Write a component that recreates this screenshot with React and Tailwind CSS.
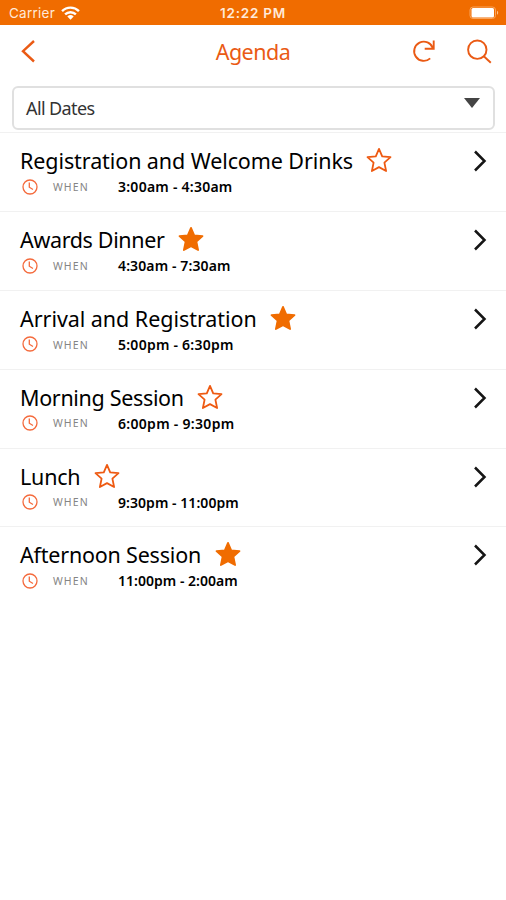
import React, { useState } from "react";

const initialSessions = [
  { id: 1, title: "Registration and Welcome Drinks", time: "3:00am - 4:30am", starred: false, titleClass: "w-[333px] tracking-[-0.09px]", timeClass: "tracking-[0.25px]" },
  { id: 2, title: "Awards Dinner", time: "4:30am - 7:30am", starred: true, titleClass: "w-[145px] tracking-[-0.35px]", timeClass: "tracking-[0.12px]" },
  { id: 3, title: "Arrival and Registration", time: "5:00pm - 6:30pm", starred: true, titleClass: "w-[237px] tracking-[-0.04px]", timeClass: "tracking-[0.25px]" },
  { id: 4, title: "Morning Session", time: "6:00pm - 9:30pm", starred: false, titleClass: "w-[164px] tracking-[-0.33px]", timeClass: "tracking-[0.3px]" },
  { id: 5, title: "Lunch", time: "9:30pm - 11:00pm", starred: false, titleClass: "w-[61px] tracking-[-0.2px]", timeClass: "tracking-[0.05px]" },
  { id: 6, title: "Afternoon Session", time: "11:00pm - 2:00am", starred: true, titleClass: "w-[182px] tracking-[-0.2px]", timeClass: "tracking-[0.02px]" },
];

function StatusBar() {
  return (
    <div className="grid h-[25px] grid-cols-3 items-center bg-[#f06c00] pt-[1px] pl-[9px] pr-[7px] font-['Inter',sans-serif] text-[13.5px] text-[#ffe9d8]">
      <div className="flex items-center gap-[6px]">
        <span className="tracking-[0.25px]">Carrier</span>
        <svg width="19" height="14" viewBox="0 0 18 13" fill="none" stroke="#fff" strokeWidth="2.3">
          <path d="M1 4.7a11.4 11.4 0 0 1 16 0" />
          <path d="M3.9 7.8a7.3 7.3 0 0 1 10.2 0" />
          <path d="M9 12.8 6 9.8a4.4 4.4 0 0 1 6 0z" fill="#fff" stroke="none" />
        </svg>
      </div>
      <span className="-ml-[2px] text-center font-semibold tracking-[0.75px]">12:22 PM</span>
      <svg className="justify-self-end" width="30" height="14" viewBox="0 0 30 14" fill="none">
        <rect x="1" y="1" width="25.5" height="11.5" rx="3" stroke="#f9a45c" />
        <rect x="2.5" y="2" width="22.5" height="9.5" rx="1.5" fill="#fff" />
        <path d="M28 4.8c1.6.6 1.6 3.4 0 4z" fill="#ffc08a" />
      </svg>
    </div>
  );
}

function Header() {
  return (
    <header className="grid h-[53px] grid-cols-3 items-center pl-[20px] pr-[14px] text-[#ea5a14]">
      <button aria-label="Back" className="-mt-[2px]">
        <svg width="16" height="24" viewBox="0 0 16 24" fill="none" stroke="currentColor" strokeWidth="2.4">
          <path d="M14 2 3 12.2 14 22.5" />
        </svg>
      </button>
      <h1 className="-ml-[6px] whitespace-nowrap text-center text-[21.5px] leading-[28px] tracking-[-0.5px]">Agenda</h1>
      <div className="-mt-[1px] flex items-center justify-end gap-[31px]">
        <button aria-label="Refresh">
          <svg width="24" height="24" viewBox="0 0 24 24" fill="none" stroke="currentColor" strokeWidth="1.9">
            <path d="M21.7 1.5v8.3h-9" />
            <path d="M20.9 9.3A9.6 9.6 0 1 0 18.2 19.4" />
          </svg>
        </button>
        <button aria-label="Search">
          <svg width="25" height="25" viewBox="0 0 25 25" fill="none" stroke="currentColor" strokeWidth="1.9">
            <circle cx="10.3" cy="10.7" r="9.2" />
            <path d="m16.8 17.3 7 6.5" />
          </svg>
        </button>
      </div>
    </header>
  );
}

function StarIcon({ filled }) {
  return (
    <svg width="26" height="26" viewBox="0 0 26 26" fill={filled ? "#f06c00" : "none"} stroke={filled ? "#f06c00" : "#ee5a12"} strokeWidth="1.8" strokeLinejoin="round">
      <path d="m13 1.9 3.2 7.5 8.3.8-6.1 5.4 1.7 8.4-7.1-3.9-7.1 3.9 1.7-8.4-6.1-5.4 8.3-.8z" />
    </svg>
  );
}

function ClockIcon() {
  return (
    <svg className="shrink-0" width="16" height="16" viewBox="0 0 16 16" fill="none" stroke="#f46a3c" strokeWidth="1.3">
      <circle cx="8" cy="8" r="7" />
      <path d="M7.3 3.5v4.7l3.7 2.3" />
    </svg>
  );
}

function SessionRow({ session, onToggle }) {
  return (
    <li className="flex h-[78.8px] justify-between border-t border-[#f1f1f1] pt-[14px] pl-[20px] pr-[19px]">
      <div>
        <div className="flex h-[28px] items-center gap-[13px]">
          <h2 className={`${session.titleClass} whitespace-nowrap text-[21.5px] leading-[28px] text-black`}>{session.title}</h2>
          <button className="-mt-[2px]" aria-label="Favourite" onClick={() => onToggle(session.id)}>
            <StarIcon filled={session.starred} />
          </button>
        </div>
        <div className="flex h-[23px] items-center pl-[2px]">
          <ClockIcon />
          <span className="w-[80px] pt-[2px] pl-[15px] text-[10.5px] tracking-[1.1px] text-[#858585]">WHEN</span>
          <span className={`${session.timeClass} whitespace-nowrap text-[14px] font-semibold text-black`}>{session.time}</span>
        </div>
      </div>
      <svg className="mt-[3px]" width="14" height="22" viewBox="0 0 14 22" fill="none" stroke="#151515" strokeWidth="2.5">
        <path d="m2 1.5 9.5 9.5L2 20.5" />
      </svg>
    </li>
  );
}

export default function App() {
  const [sessions, setSessions] = useState(initialSessions);

  const toggleStar = (id) => {
    setSessions((prev) => prev.map((s) => (s.id === id ? { ...s, starred: !s.starred } : s)));
  };

  return (
    <div className="min-h-screen bg-white font-['Noto_Sans',sans-serif]">
      <StatusBar />
      <Header />
      <div className="pt-[8px] pr-[11px] pb-[2.4px] pl-[12px]">
        <button className="flex h-[44px] w-full items-center justify-between rounded-[6px] border-2 border-[#e0e0e0] pl-[12px] pr-[13px]">
          <span className="pt-[1px] text-[18px] tracking-[-0.6px] text-[#333]">All Dates</span>
          <svg className="mb-[10px]" width="16" height="10" viewBox="0 0 16 10" fill="#444">
            <path d="M0 0h16L8 10z" />
          </svg>
        </button>
      </div>
      <ul>
        {sessions.map((session) => (
          <SessionRow key={session.id} session={session} onToggle={toggleStar} />
        ))}
      </ul>
    </div>
  );
}
